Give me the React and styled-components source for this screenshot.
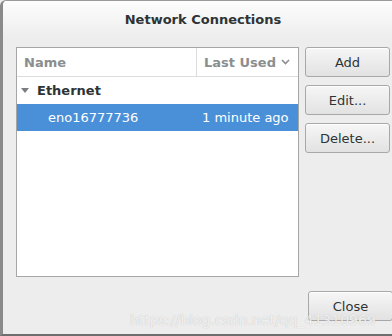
import React from 'react';
import styled, { createGlobalStyle } from 'styled-components';

const GlobalStyle = createGlobalStyle`
  html, body {
    margin: 0;
    padding: 0;
    background: #ededed;
    font-family: "DejaVu Sans", "Noto Sans", sans-serif;
  }
`;

const Window = styled.div`
  width: 392px;
  height: 336px;
  box-sizing: border-box;
  background: #ededed;
  border-left: 3px solid #8a8a8a;
  border-top: 1px solid #9a9a9a;
  border-bottom: 2px solid #6e6e6e;
  border-top-left-radius: 6px;
  display: flex;
  flex-direction: column;
  overflow: hidden;
  position: relative;
`;

const TitleBar = styled.div`
  height: 36px;
  display: flex;
  align-items: center;
  justify-content: center;
  background: linear-gradient(#fdfdfd, #ededed);
  font-size: 13px;
  font-weight: bold;
  color: #2e3436;
  padding-left: 11px;
`;

const Body = styled.div`
  flex: 1;
  display: flex;
  flex-direction: column;
  padding: 10px 0 13px 13px;
`;

const Main = styled.div`
  flex: 1;
  display: flex;
  gap: 6px;
`;

const Tree = styled.div`
  width: 283px;
  height: 230px;
  box-sizing: border-box;
  border: 1px solid #a6a6a6;
  background: #fff;
  display: flex;
  flex-direction: column;
`;

const Header = styled.div`
  height: 28px;
  display: flex;
  border-bottom: 1px solid #dcdcdc;
  color: #8b8e8f;
  font-size: 13px;
  font-weight: bold;
`;

const HeadCell = styled.div`
  display: flex;
  align-items: center;
  gap: 5px;
  padding-left: ${p => p.pad}px;
  width: ${p => p.w ? `${p.w}px` : 'auto'};
  flex: ${p => p.w ? 'none' : 1};
  box-sizing: border-box;
  border-right: ${p => p.sep ? '1px solid #dcdcdc' : 'none'};
`;

const Row = styled.div`
  height: 27px;
  display: flex;
  align-items: center;
  font-size: 13px;
  background: ${p => p.selected ? '#4a90d9' : 'transparent'};
  color: ${p => p.selected ? '#fff' : '#2e3436'};
  font-weight: ${p => p.bold ? 'bold' : 'normal'};
`;

const Cell = styled.div`
  padding-left: ${p => p.pad}px;
  width: ${p => p.w ? `${p.w}px` : 'auto'};
  flex: ${p => p.w ? 'none' : 1};
  box-sizing: border-box;
  display: flex;
  align-items: center;
  gap: 8px;
`;

const Side = styled.div`
  display: flex;
  flex-direction: column;
  gap: 8px;
`;

const Button = styled.button`
  width: 85px;
  height: 30px;
  box-sizing: border-box;
  border: 1px solid #a8a8a8;
  border-radius: 3px;
  background: linear-gradient(#f6f6f6, #e2e2e2);
  font-family: "DejaVu Sans", "Noto Sans", sans-serif;
  font-size: 13px;
  color: #2e3436;
  padding: 0;
  box-shadow: inset 0 1px 0 #fff;
`;

const Footer = styled.div`
  display: flex;
  justify-content: flex-end;
  margin-right: -1px;
`;

const Watermark = styled.div`
  position: absolute;
  left: 127px;
  top: 311px;
  font-size: 14px;
  line-height: 16px;
  color: rgba(255, 255, 255, 0.8);
  text-shadow: 0 0 1px rgba(140, 140, 140, 0.6);
  pointer-events: none;
`;

const Caret = () => (
  <svg width="9" height="6" viewBox="0 0 9 6">
    <path d="M1 1 L4.5 4.5 L8 1" fill="none" stroke="#8b8e8f" strokeWidth="1.6" />
  </svg>
);

const Expander = () => (
  <svg width="8" height="6" viewBox="0 0 8 6">
    <path d="M0 0 L8 0 L4 5 Z" fill="#7a7e80" />
  </svg>
);

export default function App() {
  return (
    <>
      <GlobalStyle />
      <Window>
        <TitleBar>Network Connections</TitleBar>
        <Body>
          <Main>
            <Tree>
              <Header>
                <HeadCell pad={7} w={180} sep>Name</HeadCell>
                <HeadCell pad={7}>Last Used <Caret /></HeadCell>
              </Header>
              <Row bold>
                <Cell pad={4}><Expander />Ethernet</Cell>
              </Row>
              <Row selected>
                <Cell pad={31} w={180}>eno16777736</Cell>
                <Cell pad={5}>1 minute ago</Cell>
              </Row>
            </Tree>
            <Side>
              <Button>Add</Button>
              <Button>Edit...</Button>
              <Button>Delete...</Button>
            </Side>
          </Main>
          <Footer>
            <Button>Close</Button>
          </Footer>
        </Body>
        <Watermark>https://blog.csdn.net/qq_41310969</Watermark>
      </Window>
    </>
  );
}
